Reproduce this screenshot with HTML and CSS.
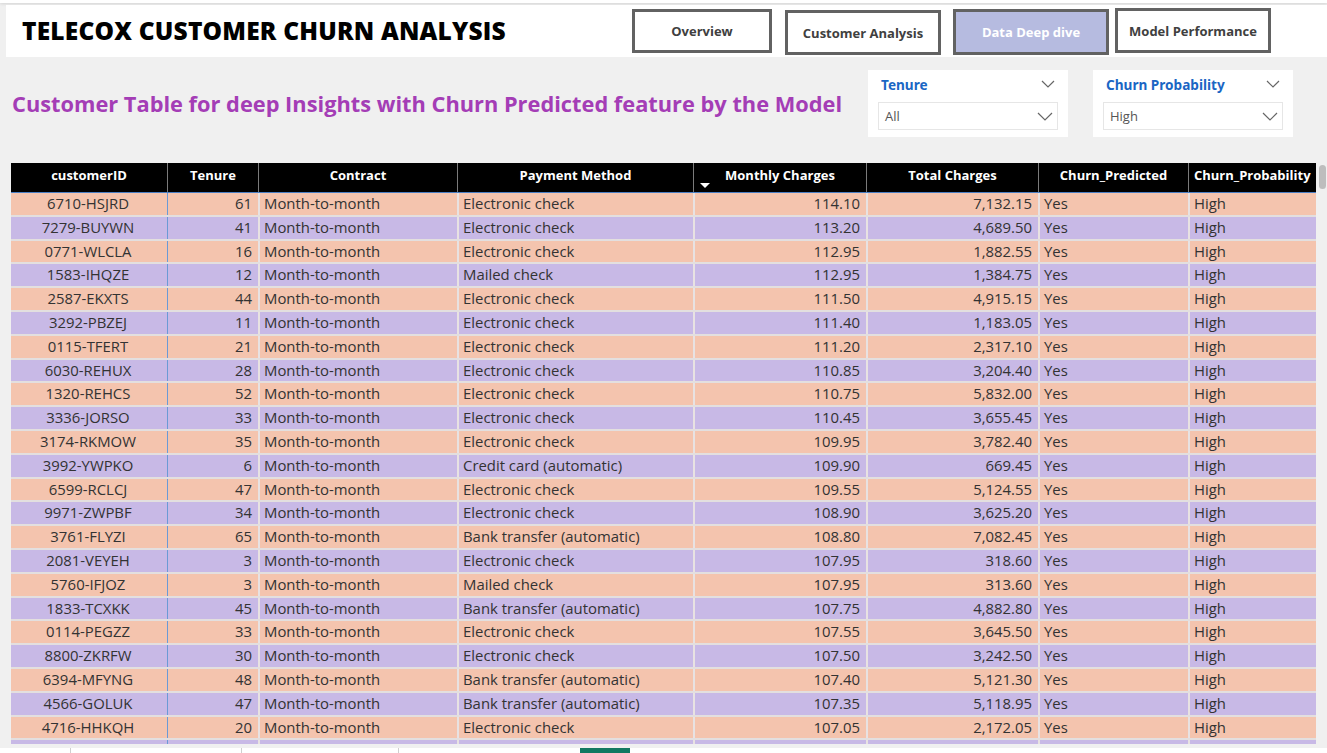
FILE: index.html
```html
<!DOCTYPE html>
<html>
<head>
<meta charset="utf-8">
<link rel="stylesheet" href="styles.css">
</head>
<body>
<div class="topstrip"></div>
<header class="header">
  <h1 class="title">TELECOX CUSTOMER CHURN ANALYSIS</h1>
  <nav class="nav">
    <div class="btn btn-overview">Overview</div>
    <div class="btn btn-customer">Customer Analysis</div>
    <div class="btn btn-active">Data Deep dive</div>
    <div class="btn btn-model">Model Performance</div>
  </nav>
</header>
<section class="filters">
  <h2 class="subtitle">Customer Table for deep Insights with Churn Predicted feature by the Model</h2>
  <div class="slicers">
    <div class="slicer">
      <div class="slicer-head"><span class="slicer-title">Tenure</span>
        <svg class="chev" width="14" height="8" viewBox="0 0 14 8"><path d="M1 1l6 6 6-6" fill="none" stroke="#666" stroke-width="1.2"/></svg></div>
      <div class="dropdown"><span>All</span>
        <svg class="chev" width="16" height="9" viewBox="0 0 16 9"><path d="M1 1l7 7 7-7" fill="none" stroke="#666" stroke-width="1.2"/></svg></div>
    </div>
    <div class="slicer">
      <div class="slicer-head"><span class="slicer-title">Churn Probability</span>
        <svg class="chev" width="14" height="8" viewBox="0 0 14 8"><path d="M1 1l6 6 6-6" fill="none" stroke="#666" stroke-width="1.2"/></svg></div>
      <div class="dropdown"><span>High</span>
        <svg class="chev" width="16" height="9" viewBox="0 0 16 9"><path d="M1 1l7 7 7-7" fill="none" stroke="#666" stroke-width="1.2"/></svg></div>
    </div>
  </div>
</section>
<section class="panel">
  <div class="grid">
    <div class="row head">
      <div class="c">customerID</div>
      <div class="c">Tenure</div>
      <div class="c">Contract</div>
      <div class="c">Payment Method</div>
      <div class="c sorted">Monthly Charges<span class="sort"></span></div>
      <div class="c">Total Charges</div>
      <div class="c">Churn_Predicted</div>
      <div class="c hl">Churn_Probability</div>
    </div>
    <div class="body">
      <div class="row a"><div class="c id">6710-HSJRD</div><div class="c r">61</div><div class="c">Month-to-month</div><div class="c">Electronic check</div><div class="c r">114.10</div><div class="c r">7,132.15</div><div class="c">Yes</div><div class="c">High</div></div>
      <div class="row b"><div class="c id">7279-BUYWN</div><div class="c r">41</div><div class="c">Month-to-month</div><div class="c">Electronic check</div><div class="c r">113.20</div><div class="c r">4,689.50</div><div class="c">Yes</div><div class="c">High</div></div>
      <div class="row a"><div class="c id">0771-WLCLA</div><div class="c r">16</div><div class="c">Month-to-month</div><div class="c">Electronic check</div><div class="c r">112.95</div><div class="c r">1,882.55</div><div class="c">Yes</div><div class="c">High</div></div>
      <div class="row b"><div class="c id">1583-IHQZE</div><div class="c r">12</div><div class="c">Month-to-month</div><div class="c">Mailed check</div><div class="c r">112.95</div><div class="c r">1,384.75</div><div class="c">Yes</div><div class="c">High</div></div>
      <div class="row a"><div class="c id">2587-EKXTS</div><div class="c r">44</div><div class="c">Month-to-month</div><div class="c">Electronic check</div><div class="c r">111.50</div><div class="c r">4,915.15</div><div class="c">Yes</div><div class="c">High</div></div>
      <div class="row b"><div class="c id">3292-PBZEJ</div><div class="c r">11</div><div class="c">Month-to-month</div><div class="c">Electronic check</div><div class="c r">111.40</div><div class="c r">1,183.05</div><div class="c">Yes</div><div class="c">High</div></div>
      <div class="row a"><div class="c id">0115-TFERT</div><div class="c r">21</div><div class="c">Month-to-month</div><div class="c">Electronic check</div><div class="c r">111.20</div><div class="c r">2,317.10</div><div class="c">Yes</div><div class="c">High</div></div>
      <div class="row b"><div class="c id">6030-REHUX</div><div class="c r">28</div><div class="c">Month-to-month</div><div class="c">Electronic check</div><div class="c r">110.85</div><div class="c r">3,204.40</div><div class="c">Yes</div><div class="c">High</div></div>
      <div class="row a"><div class="c id">1320-REHCS</div><div class="c r">52</div><div class="c">Month-to-month</div><div class="c">Electronic check</div><div class="c r">110.75</div><div class="c r">5,832.00</div><div class="c">Yes</div><div class="c">High</div></div>
      <div class="row b"><div class="c id">3336-JORSO</div><div class="c r">33</div><div class="c">Month-to-month</div><div class="c">Electronic check</div><div class="c r">110.45</div><div class="c r">3,655.45</div><div class="c">Yes</div><div class="c">High</div></div>
      <div class="row a"><div class="c id">3174-RKMOW</div><div class="c r">35</div><div class="c">Month-to-month</div><div class="c">Electronic check</div><div class="c r">109.95</div><div class="c r">3,782.40</div><div class="c">Yes</div><div class="c">High</div></div>
      <div class="row b"><div class="c id">3992-YWPKO</div><div class="c r">6</div><div class="c">Month-to-month</div><div class="c">Credit card (automatic)</div><div class="c r">109.90</div><div class="c r">669.45</div><div class="c">Yes</div><div class="c">High</div></div>
      <div class="row a"><div class="c id">6599-RCLCJ</div><div class="c r">47</div><div class="c">Month-to-month</div><div class="c">Electronic check</div><div class="c r">109.55</div><div class="c r">5,124.55</div><div class="c">Yes</div><div class="c">High</div></div>
      <div class="row b"><div class="c id">9971-ZWPBF</div><div class="c r">34</div><div class="c">Month-to-month</div><div class="c">Electronic check</div><div class="c r">108.90</div><div class="c r">3,625.20</div><div class="c">Yes</div><div class="c">High</div></div>
      <div class="row a"><div class="c id">3761-FLYZI</div><div class="c r">65</div><div class="c">Month-to-month</div><div class="c">Bank transfer (automatic)</div><div class="c r">108.80</div><div class="c r">7,082.45</div><div class="c">Yes</div><div class="c">High</div></div>
      <div class="row b"><div class="c id">2081-VEYEH</div><div class="c r">3</div><div class="c">Month-to-month</div><div class="c">Electronic check</div><div class="c r">107.95</div><div class="c r">318.60</div><div class="c">Yes</div><div class="c">High</div></div>
      <div class="row a"><div class="c id">5760-IFJOZ</div><div class="c r">3</div><div class="c">Month-to-month</div><div class="c">Mailed check</div><div class="c r">107.95</div><div class="c r">313.60</div><div class="c">Yes</div><div class="c">High</div></div>
      <div class="row b"><div class="c id">1833-TCXKK</div><div class="c r">45</div><div class="c">Month-to-month</div><div class="c">Bank transfer (automatic)</div><div class="c r">107.75</div><div class="c r">4,882.80</div><div class="c">Yes</div><div class="c">High</div></div>
      <div class="row a"><div class="c id">0114-PEGZZ</div><div class="c r">33</div><div class="c">Month-to-month</div><div class="c">Electronic check</div><div class="c r">107.55</div><div class="c r">3,645.50</div><div class="c">Yes</div><div class="c">High</div></div>
      <div class="row b"><div class="c id">8800-ZKRFW</div><div class="c r">30</div><div class="c">Month-to-month</div><div class="c">Electronic check</div><div class="c r">107.50</div><div class="c r">3,242.50</div><div class="c">Yes</div><div class="c">High</div></div>
      <div class="row a"><div class="c id">6394-MFYNG</div><div class="c r">48</div><div class="c">Month-to-month</div><div class="c">Bank transfer (automatic)</div><div class="c r">107.40</div><div class="c r">5,121.30</div><div class="c">Yes</div><div class="c">High</div></div>
      <div class="row b"><div class="c id">4566-GOLUK</div><div class="c r">47</div><div class="c">Month-to-month</div><div class="c">Bank transfer (automatic)</div><div class="c r">107.35</div><div class="c r">5,118.95</div><div class="c">Yes</div><div class="c">High</div></div>
      <div class="row a"><div class="c id">4716-HHKQH</div><div class="c r">20</div><div class="c">Month-to-month</div><div class="c">Electronic check</div><div class="c r">107.05</div><div class="c r">2,172.05</div><div class="c">Yes</div><div class="c">High</div></div>
      <div class="row b"><div class="c"></div><div class="c"></div><div class="c"></div><div class="c"></div><div class="c"></div><div class="c"></div><div class="c"></div><div class="c"></div></div>
    </div>
  </div>
  <div class="scrollbar"><div class="thumb"></div></div>
</section>
<footer class="bottombar">
  <div class="tab t1"></div>
  <div class="tab t2"></div>
  <div class="tab t3"></div>
  <div class="tab t4 active"></div>
</footer>
</body>
</html>
```

FILE: styles.css
```css
* { box-sizing: border-box; }
html, body { margin: 0; padding: 0; }
body {
  width: 1327px;
  height: 753px;
  overflow: hidden;
  background: #f0f0f0;
  font-family: "Open Sans", "Noto Sans", sans-serif;
  color: #333;
}
.topstrip {
  height: 3px;
  background: #fff;
  box-shadow: 0 1px 3px rgba(0,0,0,0.12);
}
.header {
  margin: 2px 0 0 6px;
  height: 52px;
  background: #fff;
  display: flex;
  align-items: flex-start;
}
.title {
  margin: 0;
  padding: 12px 0 0 16px;
  font-family: "Open Sans", sans-serif;
  font-weight: 800;
  font-size: 24.5px;
  line-height: 28px;
  color: #000;
  letter-spacing: 0.2px;
}
.nav {
  margin-left: auto;
  margin-right: 56px;
  display: flex;
  align-items: flex-start;
}
.btn {
  border: 3px solid #626262;
  background: #fff;
  display: flex;
  align-items: center;
  justify-content: center;
  font-family: "Open Sans", sans-serif;
  font-weight: 700;
  font-size: 13px;
  color: #404040;
  width: 156px;
}
.btn-overview { width: 140px; height: 44px; margin-top: 4px; }
.btn-customer { height: 45px; margin-top: 5px; margin-left: 13px; }
.btn-active { height: 46px; margin-top: 4px; margin-left: 12px; background: #b6bbe0; color: #fff; }
.btn-model { height: 45px; margin-top: 3px; margin-left: 6px; }

.filters {
  height: 106px;
  display: flex;
  align-items: flex-start;
}
.subtitle {
  margin: 33px 0 0 12px;
  font-size: 21.8px;
  font-weight: 700;
  color: #a43db6;
  line-height: 28px;
}
.slicers {
  margin-left: auto;
  margin-right: 34px;
  margin-top: 13px;
  display: flex;
  gap: 25px;
}
.slicer {
  width: 200px;
  height: 67px;
  background: #fff;
  padding: 5px 10px 0 10px;
}
.slicer-head {
  display: flex;
  align-items: center;
  justify-content: space-between;
  padding: 0 3px 0 3px;
  height: 18px;
}
.slicer-title {
  font-family: "Noto Sans", sans-serif;
  font-weight: 700;
  font-size: 13.6px;
  color: #1a66c4;
}
.dropdown {
  margin-top: 9px;
  height: 28px;
  border: 1px solid #e6e6e6;
  display: flex;
  align-items: center;
  justify-content: space-between;
  padding: 0 4px 0 6px;
  font-size: 13px;
  color: #555;
}

.panel {
  display: flex;
  height: 581px;
  padding-left: 11px;
  overflow: hidden;
}
.grid { width: 1305px; }
.row {
  display: grid;
  grid-template-columns: 156px 91px 199px 236px 173px 172px 150px 128px;
}
.head {
  height: 30px;
  background: #000;
  border-bottom: 1px solid #4b7fc4;
}
.head .c {
  color: #fff;
  font-weight: 700;
  font-size: 13px;
  display: flex;
  align-items: center;
  justify-content: center;
  padding-bottom: 5px;
  border-left: 1px solid #7a7a7a;
  position: relative;
}
.head .c:first-child { border-left: none; }
.head .hl { justify-content: flex-start; padding-left: 5px; }
.sort {
  position: absolute;
  left: 6px;
  bottom: 4px;
  width: 0; height: 0;
  border-left: 5px solid transparent;
  border-right: 5px solid transparent;
  border-top: 5px solid #fff;
}
.body .row {
  height: 21.8px;
  margin-top: 2px;
  box-shadow: 0 -2px 0 #e3dfdf;
}
.body .row:first-child { margin-top: 0; box-shadow: none; }
.row.a { background: #f4c4ae; }
.row.b { background: #c8b9e6; }
.body .c {
  font-size: 14.9px;
  line-height: 21.8px;
  padding: 0 6px 0 4px;
  white-space: nowrap;
  overflow: hidden;
  color: #333;
  border-left: 2px solid #e8e2e2;
}
.body .c:first-child { border-left: none; }
.body .c:nth-child(2) { border-left: 1px solid #6b9ad6; }
.body .c.id { text-align: center; }
.body .c.r { text-align: right; }
.scrollbar {
  width: 11px;
  padding: 2px 0 0 3px;
}
.thumb {
  width: 7px;
  height: 24px;
  background: #bdbdbd;
  border-radius: 4px;
}
.bottombar {
  margin-top: 4px;
  height: 5px;
  background: #fff;
  display: flex;
  align-items: stretch;
}
.tab { border-right: 1px solid #cfcfcf; }
.t1 { width: 71px; }
.t2 { width: 171px; }
.t3 { width: 157px; }
.t4.active { margin-left: 181px; width: 50px; background: #127862; border: none; }
```
